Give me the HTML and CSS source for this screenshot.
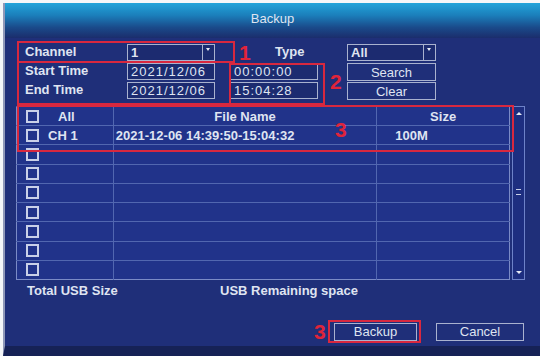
FILE: index.html
```html
<!DOCTYPE html>
<html>
<head>
    <title>Backup</title>
    <link rel="stylesheet" href="styles.css">
</head>
<body>
<div class="dialog">
    <div class="title">Backup</div>

    <div class="filters">
        <span class="lbl">Channel</span>
        <div class="select"><span>1</span><i class="arrow"></i></div>
        <span class="lbl type-lbl">Type</span>
        <div class="select type-sel"><span>All</span><i class="arrow"></i></div>

        <span class="lbl">Start Time</span>
        <div class="field">2021/12/06</div>
        <div class="field time">00:00:00</div>
        <a href="#" class="btn small">Search</a>

        <span class="lbl">End Time</span>
        <div class="field">2021/12/06</div>
        <div class="field time">15:04:28</div>
        <a href="#" class="btn small">Clear</a>
    </div>

    <div class="list">
        <table>
            <colgroup>
                <col class="c-ch">
                <col class="c-name">
                <col class="c-size">
            </colgroup>
            <thead>
            <tr>
                <th class="ch"><i class="check"></i><span class="all">All</span></th>
                <th>File Name</th>
                <th>Size</th>
            </tr>
            </thead>
            <tbody>
            <tr>
                <td class="ch"><i class="check"></i><span class="chn">CH 1</span></td>
                <td class="name">2021-12-06 14:39:50-15:04:32</td>
                <td class="size">100M</td>
            </tr>
            <tr><td class="ch"><i class="check"></i></td><td></td><td></td></tr>
            <tr><td class="ch"><i class="check"></i></td><td></td><td></td></tr>
            <tr><td class="ch"><i class="check"></i></td><td></td><td></td></tr>
            <tr><td class="ch"><i class="check"></i></td><td></td><td></td></tr>
            <tr><td class="ch"><i class="check"></i></td><td></td><td></td></tr>
            <tr><td class="ch"><i class="check"></i></td><td></td><td></td></tr>
            <tr><td class="ch"><i class="check"></i></td><td></td><td></td></tr>
            </tbody>
        </table>
        <div class="scrollbar">
            <i class="up"></i>
            <i class="thumb"></i>
            <i class="down"></i>
        </div>
    </div>

    <div class="usb">
        <span class="total">Total USB Size</span>
        <span>USB Remaining space</span>
    </div>

    <div class="actions">
        <a href="#" class="btn">Backup</a>
        <a href="#" class="btn">Cancel</a>
    </div>

    <!-- red markings drawn over the screen -->
    <div class="mark box-channel"></div>
    <div class="mark box-times"></div>
    <div class="mark box-clock"></div>
    <div class="mark box-row"></div>
    <div class="mark box-backup"></div>
    <span class="num n1">1</span>
    <span class="num n2">2</span>
    <span class="num n3">3</span>
    <span class="num n4">3</span>
</div>
</body>
</html>
```

FILE: styles.css
```css
body {
    margin: 0;
    padding: 3px 0 0 3px;
    background-color: #f4f6f8;
    font-family: "Liberation Sans", Arial, sans-serif;
    font-size: 13px;
    font-weight: bold;
    color: #dfe4f1;
}

.dialog {
    position: relative;
    width: 535px;
    height: 343px;
    background-color: #1f2f79;
    border-left: 2px solid #8f98b8;
    border-bottom: 10px solid #162256;
    overflow: hidden;
}

.title {
    height: 35px;
    line-height: 32px;
    text-align: center;
    font-weight: normal;
    background: linear-gradient(to bottom, #22a4da 0%, #1b7fbb 35%, #1a4a8a 70%, #1b2d6c 100%);
}

/* Filter area */
.filters {
    display: grid;
    grid-template-columns: 111px 88px 15px 88px 29px 89px;
    grid-template-rows: 18px 18px 18px;
    row-gap: 1px;
    margin: 6px 0 0 11px;
}

.lbl {
    padding-left: 9px;
    line-height: 16px;
}

.type-lbl {
    grid-column: 4;
    padding-left: 45px;
}

.select, .field {
    border: 1px solid #a9b2cf;
    background-color: #1c2b70;
    line-height: 15px;
    padding-left: 3px;
    height: 17px;
    box-sizing: border-box;
}

.field {
    font-weight: normal;
    letter-spacing: 1px;
}

.select {
    display: flex;
    justify-content: space-between;
    padding-right: 0;
}

.type-sel {
    grid-column: 6;
}

.arrow {
    width: 11px;
    border-left: 1px solid #a9b2cf;
    position: relative;
}

.arrow:after {
    content: "";
    position: absolute;
    left: 3px;
    top: 3px;
    border: 2px solid transparent;
    border-top: 3px solid #e6eaf4;
}

.field.time {
    grid-column: 4;
}

.btn {
    display: block;
    border: 1px solid #a9b2cf;
    color: #dfe4f1;
    font-weight: normal;
    text-decoration: none;
    text-align: center;
    box-sizing: border-box;
}

.btn.small {
    grid-column: 6;
    line-height: 17px;
}

/* File list */
.list {
    display: flex;
    margin: 6px 0 0 11px;
}

table {
    border-collapse: collapse;
    width: 494px;
    background-color: #21338a;
    border: 1px solid #7b8bc6;
}

.c-ch { width: 97px; }
.c-name { width: 264px; }
.c-size { width: 133px; }

th, td {
    height: 18px;
    padding: 0;
    border-top: 1px solid #5267b0;
    border-left: 1px solid #5267b0;
    text-align: center;
}

td.ch, th.ch {
    text-align: left;
    padding-left: 9px;
    border-left: none;
}

td.name, td.size {
    text-align: left;
    padding-left: 2px;
}

td.size {
    padding-left: 18px;
}

.check {
    display: inline-block;
    width: 9px;
    height: 9px;
    border: 2px solid #c9d0e8;
    vertical-align: -2px;
}

.all {
    margin-left: 19px;
}

.chn {
    margin-left: 9px;
}

.scrollbar {
    position: relative;
    width: 11px;
    height: 172px;
    margin-left: 2px;
    border: 1px solid #6d82c8;
    background-color: #1d2e80;
}

.scrollbar i {
    position: absolute;
    left: 3px;
}

.up {
    top: 5px;
    border: 3px solid transparent;
    border-bottom: 3px solid #e6eaf4;
    border-top: none;
}

.down {
    bottom: 5px;
    border: 3px solid transparent;
    border-top: 3px solid #e6eaf4;
    border-bottom: none;
}

.thumb {
    top: 82px;
    width: 5px;
    height: 4px;
    border-top: 1px solid #c9d0e8;
    border-bottom: 1px solid #c9d0e8;
}

.usb {
    display: flex;
    margin: 4px 0 0 22px;
    line-height: 14px;
}

.total {
    width: 193px;
}

.actions {
    display: flex;
    justify-content: flex-end;
    gap: 19px;
    margin: 25px 16px 0 0;
}

.actions .btn {
    width: 88px;
    height: 18px;
    line-height: 16px;
}

.actions .btn:first-child {
    width: 83px;
}

/* Red markings */
.mark {
    position: absolute;
    border: 2px solid #d8283f;
    box-sizing: border-box;
}

.box-channel { left: 12px; top: 38px; width: 218px; height: 22px; }
.box-times { left: 12px; top: 58px; width: 308px; height: 44px; border-top: none; border-right: none; }
.box-clock { left: 224px; top: 60px; width: 96px; height: 42px; }
.box-row { left: 12px; top: 102px; width: 497px; height: 47px; }
.box-backup { left: 323px; top: 317px; width: 93px; height: 23px; }

.num {
    position: absolute;
    color: #e0243a;
    font-size: 21px;
    font-weight: bold;
    line-height: 18px;
}

.n1 { left: 234px; top: 41px; }
.n2 { left: 325px; top: 70px; }
.n3 { left: 330px; top: 118px; }
.n4 { left: 309px; top: 320px; }
```
